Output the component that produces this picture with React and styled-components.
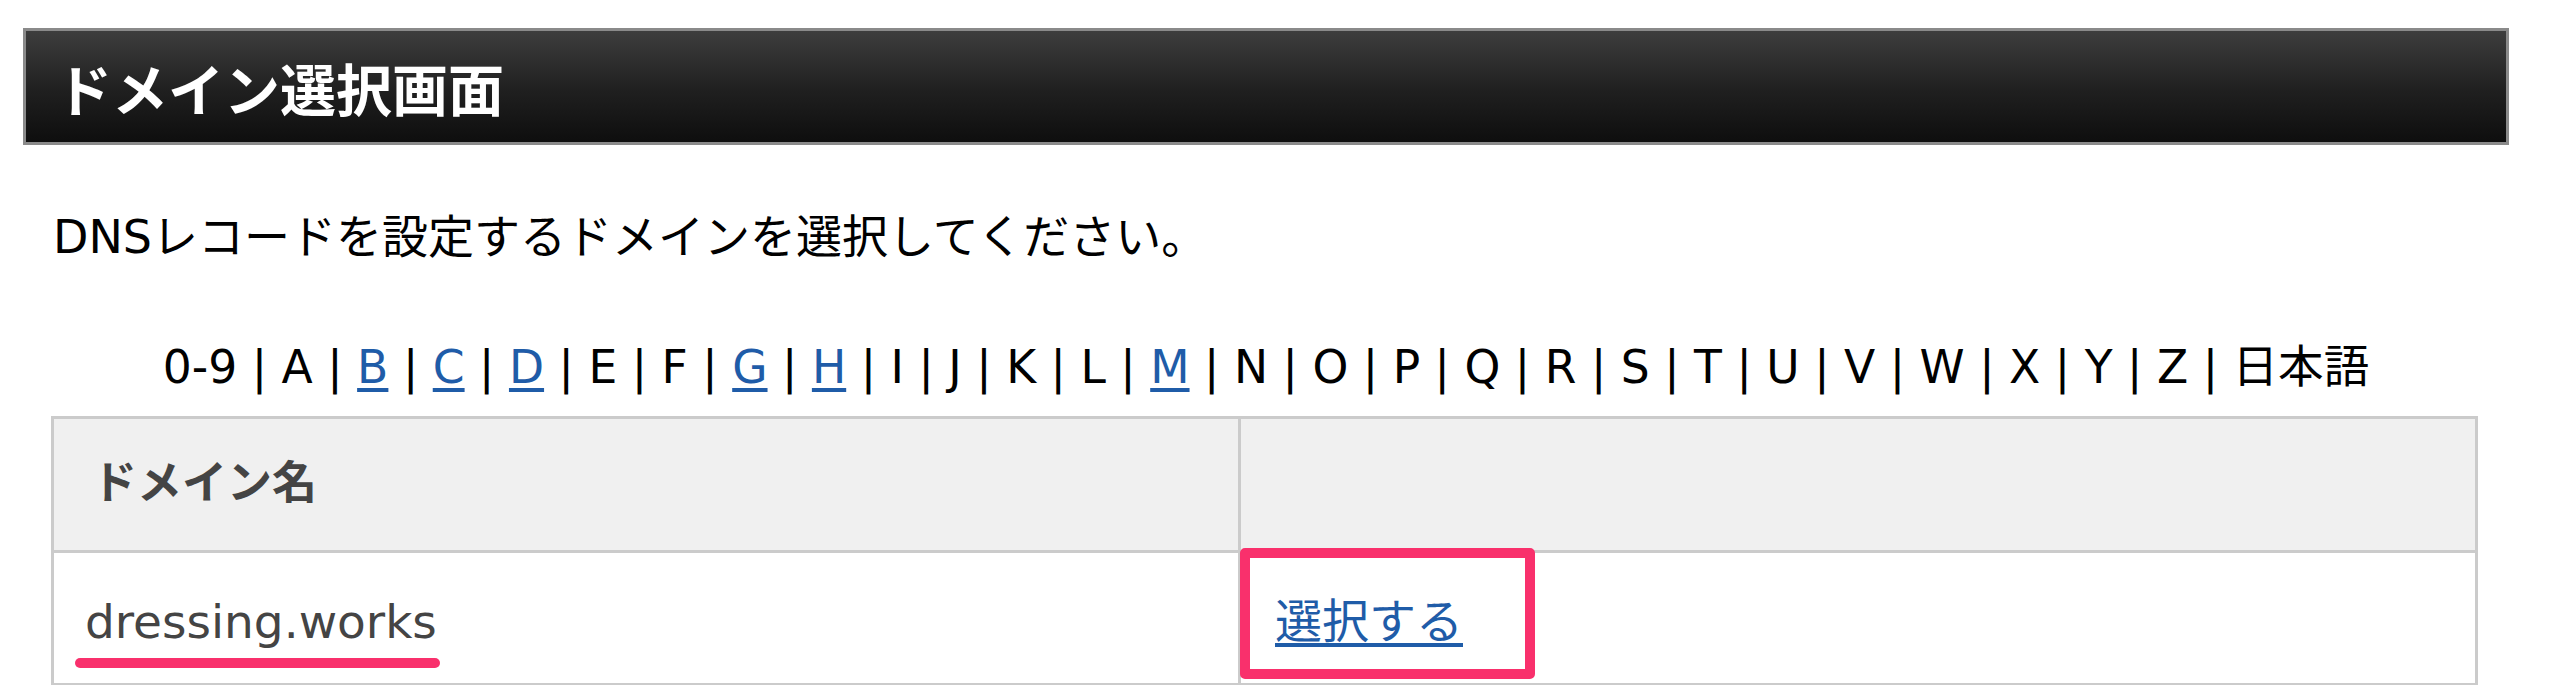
import React from "react";
import styled, { createGlobalStyle } from "styled-components";

const GlobalStyle = createGlobalStyle`
  body {
    margin: 0;
    background: #fff;
    color: #000;
    font-family: "DejaVu Sans", "Noto Sans CJK JP", sans-serif;
  }
`;

const Page = styled.div`
  width: 2486px;
  padding: 28px 0 40px 23px;
`;

const TitleBar = styled.h1`
  box-sizing: border-box;
  display: flex;
  align-items: center;
  height: 117px;
  margin: 0;
  padding-left: 30px;
  border: 3px solid #8a8a8a;
  background: linear-gradient(#3d3d3d, #1f1f1f 55%, #0e0e0e);
  color: #fff;
  font-size: 56px;
  font-weight: bold;
`;

const Lead = styled.p`
  margin: 58px 0 0;
  padding-left: 30px;
  font-size: 46px;
  line-height: 68px;
`;

const IndexLine = styled.div`
  margin-top: 63px;
  text-align: center;
  font-size: 45.6px;
  line-height: 68px;
  white-space: pre;
`;

const IndexLink = styled.a`
  color: #1f5ca8;
  text-decoration: underline;
  text-underline-offset: 5px;
`;

const Table = styled.table`
  width: 2427px;
  margin: 14px 0 0 28px;
  border-collapse: collapse;
  table-layout: fixed;
`;

const HeadCell = styled.th`
  width: ${(props) => props.$width || "auto"};
  padding: 31px 38px 32px;
  border: 3px solid #cbcbcb;
  background: #f0f0f0;
  color: #444;
  font-size: 45px;
  font-weight: bold;
  line-height: 68px;
  text-align: left;
`;

const Cell = styled.td`
  padding: 35px ${(props) => props.$pad || "31px"} 27px;
  border: 3px solid #cbcbcb;
  color: #444;
  font-size: 47px;
  line-height: 68px;
`;

const Marked = styled.span`
  position: relative;

  &::after {
    content: "";
    position: absolute;
    left: -10px;
    right: -3px;
    bottom: -19px;
    height: 10px;
    border-radius: 5px;
    background: #f9306c;
  }
`;

const Boxed = styled.span`
  position: relative;

  &::after {
    content: "";
    position: absolute;
    top: -46px;
    bottom: -30px;
    left: -35px;
    right: -72px;
    border: 10px solid #f9306c;
    border-radius: 5px;
    pointer-events: none;
  }
`;

const SelectLink = styled.a`
  color: #1f5ca8;
  text-decoration: underline;
  text-underline-offset: 5px;
`;

const letters = [
  { label: "0-9" },
  { label: "A" },
  { label: "B", link: true },
  { label: "C", link: true },
  { label: "D", link: true },
  { label: "E" },
  { label: "F" },
  { label: "G", link: true },
  { label: "H", link: true },
  { label: "I" },
  { label: "J" },
  { label: "K" },
  { label: "L" },
  { label: "M", link: true },
  ..."NOPQRSTUVWXYZ".split("").map((c) => ({ label: c })),
  { label: "日本語" },
];

export default function App() {
  return (
    <>
      <GlobalStyle />
      <Page>
        <TitleBar>ドメイン選択画面</TitleBar>
        <Lead>DNSレコードを設定するドメインを選択してください。</Lead>
        <IndexLine>
          {letters.map((item, i) => (
            <React.Fragment key={item.label}>
              {i > 0 && " | "}
              {item.link ? (
                <IndexLink href="#">{item.label}</IndexLink>
              ) : (
                item.label
              )}
            </React.Fragment>
          ))}
        </IndexLine>
        <Table>
          <thead>
            <tr>
              <HeadCell $width="1108px">ドメイン名</HeadCell>
              <HeadCell />
            </tr>
          </thead>
          <tbody>
            <tr>
              <Cell>
                <Marked>dressing.works</Marked>
              </Cell>
              <Cell $pad="34px">
                <Boxed>
                  <SelectLink href="#">選択する</SelectLink>
                </Boxed>
              </Cell>
            </tr>
          </tbody>
        </Table>
      </Page>
    </>
  );
}
